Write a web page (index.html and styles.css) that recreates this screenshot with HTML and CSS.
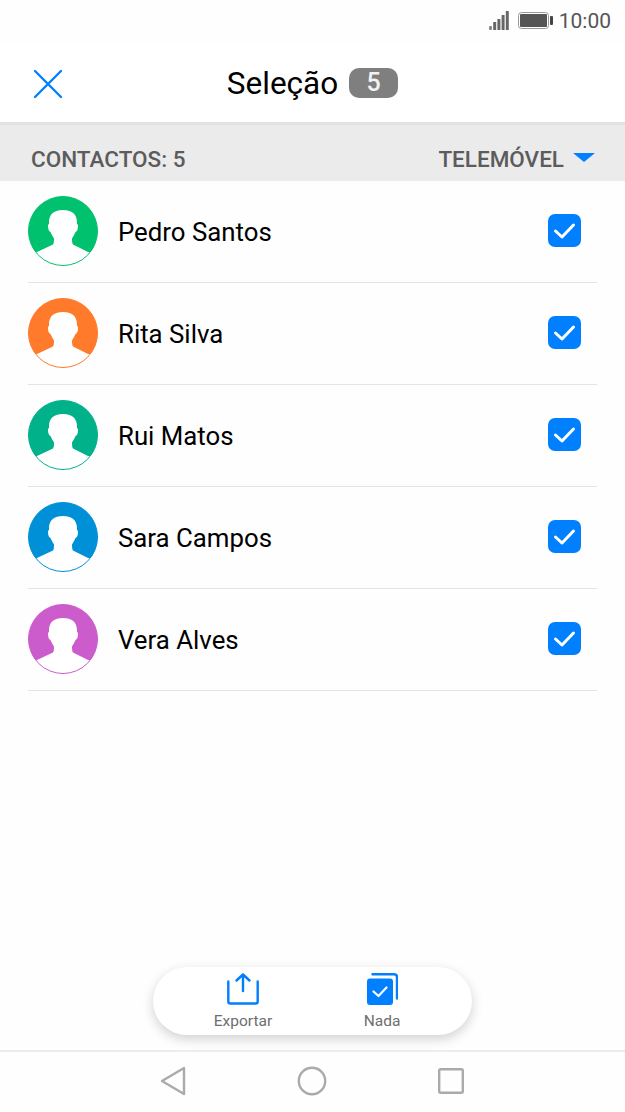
FILE: index.html
```html
<!DOCTYPE html>
<html lang="pt-PT">
<head>
  <meta charset="UTF-8">
  <meta name="viewport" content="width=device-width, initial-scale=1.0">
  <title>Seleção</title>
  <link rel="stylesheet" href="styles.css">
</head>
<body>
  <svg class="defs" width="0" height="0">
    <symbol id="avatar" viewBox="0 0 70 70">
      <circle cx="35" cy="35" r="34.500" fill="#fff" stroke="currentColor" stroke-width="1"/>
      <path fill="currentColor" d="M7.600 56 A34.500 34.500 0 1 1 62.400 56 L60 56 L45 48.500 Q44 47.500 44 42.500 Q46 39.500 47.500 36 Q50 35 50 30 Q50 28 49 28 C49.500 18 44 14 35 14 C26 14 20.500 18 21 28 Q20 28 20 30 Q20 35 22.500 36 Q24 39.500 26 42.500 Q26 47.500 25 48.500 L9 56 Z"/>
    </symbol>
    <symbol id="check" viewBox="0 0 33 33">
      <rect width="33" height="33" rx="7" fill="#0080ff"/>
      <path d="M7.500 17 L14 23 L25.500 11" fill="none" stroke="#fff" stroke-width="3" stroke-linecap="round" stroke-linejoin="round"/>
    </symbol>
  </svg>

  <div class="status">
    <svg class="signal" width="20" height="19" viewBox="0 0 20 19">
      <rect x="0" y="15" width="3" height="4" rx="1" fill="#888"/>
      <rect x="4.200" y="11" width="3" height="8" rx="0.500" fill="#666"/>
      <rect x="8.400" y="8" width="3" height="11" rx="0.500" fill="#666"/>
      <rect x="12.600" y="4" width="3" height="15" rx="0.500" fill="#666"/>
      <rect x="16.800" y="0" width="3" height="19" rx="0.500" fill="#666"/>
    </svg>
    <svg class="battery" width="35" height="17" viewBox="0 0 35 17">
      <rect x="0.500" y="0.500" width="30" height="16" rx="3" fill="none" stroke="#999"/>
      <rect x="2" y="2" width="27" height="13" rx="1" fill="#555"/>
      <rect x="32" y="4" width="3" height="9" rx="1" fill="#444"/>
    </svg>
    <span class="clock">10:00</span>
  </div>

  <header class="topbar">
    <svg class="close" width="30" height="30" viewBox="0 0 30 30">
      <path d="M2 2 L28 28 M28 2 L2 28" stroke="#0080ff" stroke-width="2.400" stroke-linecap="round"/>
    </svg>
    <div class="title">
      <span>Seleção</span>
      <span class="count">5</span>
    </div>
  </header>

  <div class="subbar">
    <span>CONTACTOS: 5</span>
    <span class="phone-type">TELEMÓVEL <i class="caret"></i></span>
  </div>

  <main>
    <ul class="contacts">
      <li class="contact">
        <svg class="avatar green"><use href="#avatar"/></svg>
        <span class="name">Pedro Santos</span>
        <svg class="tick"><use href="#check"/></svg>
      </li>
      <li class="contact">
        <svg class="avatar orange"><use href="#avatar"/></svg>
        <span class="name">Rita Silva</span>
        <svg class="tick"><use href="#check"/></svg>
      </li>
      <li class="contact">
        <svg class="avatar teal"><use href="#avatar"/></svg>
        <span class="name">Rui Matos</span>
        <svg class="tick"><use href="#check"/></svg>
      </li>
      <li class="contact">
        <svg class="avatar blue"><use href="#avatar"/></svg>
        <span class="name">Sara Campos</span>
        <svg class="tick"><use href="#check"/></svg>
      </li>
      <li class="contact">
        <svg class="avatar purple"><use href="#avatar"/></svg>
        <span class="name">Vera Alves</span>
        <svg class="tick"><use href="#check"/></svg>
      </li>
    </ul>

    <div class="actions">
      <div class="action">
        <svg width="32" height="32" viewBox="0 0 32 32">
          <path d="M1.300 8.500 V28.500 Q1.300 30.500 3.300 30.500 H28.700 Q30.700 30.500 30.700 28.500 V8.500 M16 18 V1.500 M9.500 7.500 L16 1.500 L22.500 7.500" fill="none" stroke="#0080ff" stroke-width="2.400" stroke-linecap="round" stroke-linejoin="round"/>
        </svg>
        <span>Exportar</span>
      </div>
      <div class="action">
        <svg width="31" height="32" viewBox="0 0 31 32">
          <path d="M5.500 1.200 H27 Q30 1.200 30 4.200 V25.500" fill="none" stroke="#0080ff" stroke-width="2.400" stroke-linecap="round"/>
          <rect x="0" y="5.500" width="26" height="26.500" rx="3" fill="#0080ff"/>
          <path d="M6.500 18.500 L11.500 23 L19.500 14.500" fill="none" stroke="#fff" stroke-width="2.200" stroke-linecap="round" stroke-linejoin="round"/>
        </svg>
        <span>Nada</span>
      </div>
    </div>
  </main>

  <nav class="navbar">
    <svg width="26" height="30" viewBox="0 0 26 30">
      <path d="M24 2 V28 L2 15 Z" fill="none" stroke="#aaa" stroke-width="2.400" stroke-linejoin="round"/>
    </svg>
    <svg width="30" height="30" viewBox="0 0 30 30">
      <circle cx="15" cy="15" r="13.200" fill="none" stroke="#aaa" stroke-width="2.400"/>
    </svg>
    <svg width="26" height="26" viewBox="0 0 26 26">
      <rect x="1.200" y="1.200" width="23.600" height="23.600" rx="1.500" fill="none" stroke="#aaa" stroke-width="2.400"/>
    </svg>
  </nav>
</body>
</html>
```

FILE: styles.css
```css
:root {
  --azul: #0080ff;
  --cinza: #ebebeb;
  --linha: #e4e4e4;
  --texto: #5c5c5c;
}

* {
  box-sizing: border-box;
}

body {
  margin: 0;
  height: 1112px;
  display: flex;
  flex-direction: column;
  font-family: Roboto, sans-serif;
  color: #000;
  background-color: #fefefe;
  overflow: hidden;
}

.defs {
  position: absolute;
}

.status {
  height: 44px;
  display: flex;
  align-items: center;
  justify-content: flex-end;
  padding: 0 14px 3px 0;
}

.signal {
  margin-right: 9px;
}

.battery {
  margin-right: 6px;
}

.clock {
  font-size: 21px;
  color: #555;
}

.topbar {
  position: relative;
  height: 78px;
  display: flex;
  align-items: center;
  justify-content: center;
  background-color: #fff;
}

.close {
  position: absolute;
  left: 33px;
  top: 25px;
}

.title {
  display: flex;
  align-items: center;
  gap: 11px;
  font-size: 31.500px;
}

.count {
  width: 49px;
  height: 30px;
  border-radius: 10px;
  background-color: #7f7f7f;
  color: #f2f2f2;
  font-size: 25px;
  font-weight: 500;
  line-height: 30px;
  text-align: center;
}

.subbar {
  height: 59px;
  padding: 12px 30px 0 31px;
  display: flex;
  align-items: center;
  justify-content: space-between;
  background-color: var(--cinza);
  border-top: 3px solid #e2e2e2;
  color: var(--texto);
  font-size: 22.500px;
  font-weight: 500;
}

.phone-type {
  display: flex;
  align-items: center;
  gap: 9px;
}

.caret {
  width: 0;
  height: 0;
  border-left: 11px solid transparent;
  border-right: 11px solid transparent;
  border-top: 9px solid var(--azul);
  margin-bottom: 3px;
}

main {
  flex: 1;
  display: flex;
  flex-direction: column;
  justify-content: space-between;
  padding: 0 28px 15px;
}

.contacts {
  list-style: none;
  margin: 0;
  padding: 0;
}

.contact {
  height: 102px;
  display: flex;
  align-items: center;
  border-bottom: 1px solid var(--linha);
  padding-bottom: 1px;
}

.avatar {
  width: 70px;
  height: 70px;
  margin-right: 20px;
}

.green { color: #00c16e; }
.orange { color: #ff7a2a; }
.teal { color: #00b18a; }
.blue { color: #0090d8; }
.purple { color: #cc5ccc; }

.name {
  flex: 1;
  font-size: 25.800px;
  padding-top: 2px;
}

.tick {
  width: 33px;
  height: 33px;
  margin: 0 16px 1px 0;
}

.actions {
  align-self: center;
  width: 319px;
  height: 68px;
  display: flex;
  justify-content: center;
  gap: 79px;
  padding-top: 6px;
  background-color: #fff;
  border-radius: 34px;
  box-shadow: 0 4px 12px rgba(0,0,0,0.18);
}

.action {
  width: 60px;
  display: flex;
  flex-direction: column;
  align-items: center;
  gap: 7px;
  font-size: 15.500px;
  color: #6e6e6e;
}

.navbar {
  height: 62px;
  display: flex;
  align-items: center;
  justify-content: space-between;
  padding: 0 161px 2px 160px;
  border-top: 2px solid #ececec;
}
```
